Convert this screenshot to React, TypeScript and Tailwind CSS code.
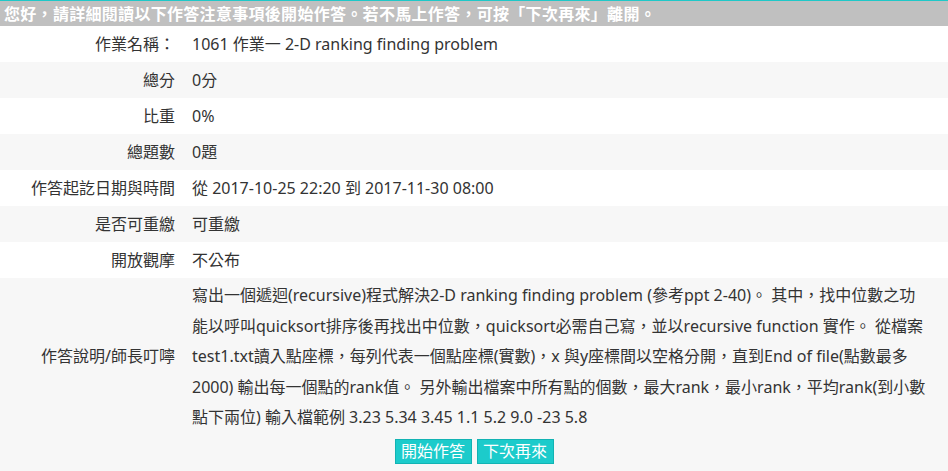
import React from "react";

const rows: [string, string][] = [
  ["作業名稱：", "1061 作業一 2-D ranking finding problem"],
  ["總分", "0分"],
  ["比重", "0%"],
  ["總題數", "0題"],
  ["作答起訖日期與時間", "從 2017-10-25 22:20 到 2017-11-30 08:00"],
  ["是否可重繳", "可重繳"],
  ["開放觀摩", "不公布"],
];

const desc = [
  "寫出一個遞迴(recursive)程式解決2-D ranking finding problem (參考ppt 2-40)。 其中，找中位數之功",
  "能以呼叫quicksort排序後再找出中位數，quicksort必需自己寫，並以recursive function 實作。 從檔案",
  "test1.txt讀入點座標，每列代表一個點座標(實數)，x 與y座標間以空格分開，直到End of file(點數最多",
  "2000) 輸出每一個點的rank值。 另外輸出檔案中所有點的個數，最大rank，最小rank，平均rank(到小數",
  "點下兩位) 輸入檔範例 3.23 5.34 3.45 1.1 5.2 9.0 -23 5.8",
];

export default function App() {
  return (
    <div
      className="w-[948px] h-[471px] overflow-hidden bg-white text-[#333] text-[16px]"
      style={{ fontFamily: '"Noto Sans", "Noto Sans CJK TC", sans-serif' }}
    >
      <div className="border-t border-[#1fc8c8] bg-[#c0c0c0] h-[26px] flex items-center pl-[4px] text-white font-bold text-[16px] tracking-[0.3px]">
        您好，請詳細閱讀以下作答注意事項後開始作答。若不馬上作答，可按「下次再來」離開。
      </div>
      {rows.map(([k, v], i) => (
        <div
          key={k}
          className={`flex items-center h-[36px] ${i % 2 === 1 ? "bg-[#f7f7f7]" : "bg-white"}`}
        >
          <div className="w-[180px] text-right pr-[5px] shrink-0">{k}</div>
          <div className="pl-[12px]">{v}</div>
        </div>
      ))}
      <div className="bg-[#f7f7f7] pt-[2px] pb-[7px]">
        <div className="flex items-center">
          <div className="w-[180px] text-right pr-[5px] shrink-0">作答說明/師長叮嚀</div>
          <div className="pl-[12px] leading-[30.5px]">
            {desc.map((l) => (
              <div key={l} className="whitespace-nowrap">{l}</div>
            ))}
          </div>
        </div>
        <div className="flex justify-center gap-[5px] mt-[6px]">
          <button className="w-[77px] h-[25px] bg-[#1ccbcb] border border-[#12b3b3] text-white text-[16px] leading-none flex items-center justify-center">
            開始作答
          </button>
          <button className="w-[77px] h-[25px] bg-[#1ccbcb] border border-[#12b3b3] text-white text-[16px] leading-none flex items-center justify-center">
            下次再來
          </button>
        </div>
      </div>
    </div>
  );
}
